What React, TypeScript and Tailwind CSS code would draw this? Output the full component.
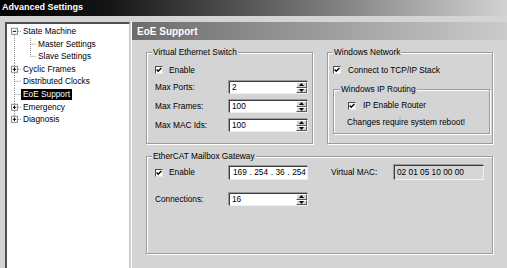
import React from "react";

const F = "font-['Liberation_Sans',Arial,sans-serif]";
const H = 12.6;
const C = H / 2;

type TreeItem = {
  label: string;
  level: 0 | 1;
  box?: "plus" | "minus";
  first?: boolean;
  last?: boolean;
  lastChild?: boolean;
  selected?: boolean;
};

const items: TreeItem[] = [
  { label: "State Machine", level: 0, box: "minus", first: true },
  { label: "Master Settings", level: 1 },
  { label: "Slave Settings", level: 1, lastChild: true },
  { label: "Cyclic Frames", level: 0, box: "plus" },
  { label: "Distributed Clocks", level: 0 },
  { label: "EoE Support", level: 0, selected: true },
  { label: "Emergency", level: 0, box: "plus" },
  { label: "Diagnosis", level: 0, box: "plus", last: true },
];

function Gutter({ it }: { it: TreeItem }) {
  const w = it.level === 0 ? 14 : 29;
  const dot = { stroke: "#8a8a8a", strokeWidth: 1, strokeDasharray: "1 1" };
  return (
    <svg width={w} height={H} viewBox={`0 0 ${w} ${H}`} className="shrink-0">
      <line x1={7.5} y1={it.first ? C : 0} x2={7.5} y2={it.last ? C : H} {...dot} />
      {it.level === 0 ? (
        <line x1={it.box ? 11 : 7.5} y1={C} x2={14} y2={C} {...dot} />
      ) : (
        <>
          <line x1={23.5} y1={0} x2={23.5} y2={it.lastChild ? C : H} {...dot} />
          <line x1={23.5} y1={C} x2={29} y2={C} {...dot} />
        </>
      )}
      {it.box && (
        <>
          <rect x={4.5} y={C - 3} width={6} height={6} fill="#fff" stroke="#8a8a8a" strokeWidth={1} />
          <line x1={5.8} y1={C} x2={9.2} y2={C} stroke="#000" strokeWidth={1} />
          {it.box === "plus" && <line x1={7.5} y1={C - 1.7} x2={7.5} y2={C + 1.7} stroke="#000" strokeWidth={1} />}
        </>
      )}
    </svg>
  );
}

function Check() {
  return (
    <span className="flex h-[8px] w-[8px] shrink-0 items-center justify-center border border-t-[#4a4a4a] border-l-[#4a4a4a] border-r-[#e6e6e6] border-b-[#e6e6e6] bg-white">
      <svg width="6" height="6" viewBox="0 0 6 6">
        <path d="M0.6 2.6 L2.2 4.3 L5.4 0.9" stroke="#000" strokeWidth="1.4" fill="none" />
      </svg>
    </span>
  );
}

function Spin() {
  const btn =
    "flex flex-1 items-center justify-center border border-t-white border-l-white border-r-[#5a5a5a] border-b-[#5a5a5a] bg-[#d4d4d4]";
  return (
    <div className="flex w-[11px] shrink-0 flex-col">
      <div className={btn}>
        <svg width="5" height="3" viewBox="0 0 5 3">
          <path d="M2.5 0 L5 3 L0 3Z" fill="#000" />
        </svg>
      </div>
      <div className={btn}>
        <svg width="5" height="3" viewBox="0 0 5 3">
          <path d="M0 0 L5 0 L2.5 3Z" fill="#000" />
        </svg>
      </div>
    </div>
  );
}

const sunken =
  "border border-t-[#3c3c3c] border-l-[#3c3c3c] border-r-[#f0f0f0] border-b-[#f0f0f0] shadow-[-1px_-1px_0_#9a9a9a]";

function NumField({ value }: { value: string }) {
  return (
    <div className={`flex h-[13px] w-[79px] items-stretch bg-white ${sunken}`}>
      <span className="flex-1 pl-[2px] leading-[11px]">{value}</span>
      <Spin />
    </div>
  );
}

function Row({ label, value, className = "" }: { label: string; value: string; className?: string }) {
  return (
    <div className={`flex items-center ${className}`}>
      <span className="w-[74px]">{label}</span>
      <NumField value={value} />
    </div>
  );
}

function Group({
  title,
  className = "",
  legendClass = "ml-[5px]",
  children,
}: {
  title: string;
  className?: string;
  legendClass?: string;
  children: React.ReactNode;
}) {
  return (
    <fieldset
      className={`border border-[#9c9c9c] shadow-[inset_1px_1px_0_#fff,1px_1px_0_#fff] ${className}`}
    >
      <legend className={`bg-[#d4d4d4] px-[1px] leading-[10px] ${legendClass}`}>{title}</legend>
      {children}
    </fieldset>
  );
}

export default function App() {
  return (
    <div className={`${F} relative h-[268px] w-[507px] overflow-hidden bg-[#d4d4d4] text-[8.3px] text-black`}>
      <div className="flex h-[16px] items-center bg-[linear-gradient(to_right,#000_0%,#161616_22%,#d2d2d2_100%)] pl-[2px] text-[9px] font-bold text-white">
        Advanced Settings
      </div>
      <div className="flex h-[252px] pt-[6px]">
        <div className="ml-[5px] w-[125px] border-l-2 border-t-2 border-r border-l-[#505050] border-t-[#505050] border-r-[#c8c8c8] bg-white pt-[1px]">
          {items.map((it) => (
            <div key={it.label} className="flex h-[12.6px] items-center">
              <Gutter it={it} />
              <span
                className={`whitespace-nowrap px-[2px] leading-[10.5px] ${
                  it.selected ? "bg-black text-white" : ""
                }`}
              >
                {it.label}
              </span>
            </div>
          ))}
        </div>
        <div className="ml-[1px] flex flex-1 flex-col border-l border-white">
          <div className="flex h-[18px] items-center bg-[linear-gradient(to_right,#6c6c6c,#cbcbcb)] pl-[5px] text-[10px] font-bold text-white">
            EoE Support
          </div>
          <div className="flex flex-col px-[14px] pt-[7px]">
            <div className="flex gap-[14px]">
              <Group title="Virtual Ethernet Switch" className="h-[97px] w-[167px] shrink-0">
                <div className="flex flex-col pl-[8px]">
                  <div className="mt-[8px] flex h-[10px] items-center gap-[6px]">
                    <Check />
                    <span>Enable</span>
                  </div>
                  <Row label="Max Ports:" value="2" className="mt-[6px]" />
                  <Row label="Max Frames:" value="100" className="mt-[6px]" />
                  <Row label="Max MAC Ids:" value="100" className="mt-[6px]" />
                </div>
              </Group>
              <Group title="Windows Network" className="h-[97px] flex-1">
                <div className="flex flex-col pl-[5px] pr-[2px]">
                  <div className="mt-[8px] flex h-[10px] items-center gap-[7px]">
                    <Check />
                    <span>Connect to TCP/IP Stack</span>
                  </div>
                  <Group title="Windows IP Routing" className="mt-[9px] h-[50px]" legendClass="ml-[6px]">
                    <div className="flex flex-col">
                      <div className="mt-[6.5px] flex h-[10px] items-center gap-[7px] pl-[14px]">
                        <Check />
                        <span>IP Enable Router</span>
                      </div>
                      <div className="mt-[6.5px] pl-[13px] leading-[10px]">Changes require system reboot!</div>
                    </div>
                  </Group>
                </div>
              </Group>
            </div>
            <Group title="EtherCAT Mailbox Gateway" className="mt-[7px] h-[103px]">
              <div className="flex flex-col pl-[8px]">
                <div className="mt-[4px] flex h-[15px] items-center">
                  <div className="flex w-[74px] items-center gap-[6px]">
                    <Check />
                    <span>Enable</span>
                  </div>
                  <div className={`flex h-[14px] w-[79px] items-center justify-between bg-white pl-[3px] pr-[1px] ${sunken}`}>
                    <span>169</span>
                    <span>.</span>
                    <span>254</span>
                    <span>.</span>
                    <span>36</span>
                    <span>.</span>
                    <span>254</span>
                  </div>
                  <span className="ml-[23px] w-[63px]">Virtual MAC:</span>
                  <div className={`flex h-[15px] w-[90px] items-center bg-[#d6d6d6] pl-[2px] ${sunken}`}>
                    02 01 05 10 00 00
                  </div>
                </div>
                <Row label="Connections:" value="16" className="mt-[13px]" />
              </div>
            </Group>
          </div>
        </div>
      </div>
    </div>
  );
}
